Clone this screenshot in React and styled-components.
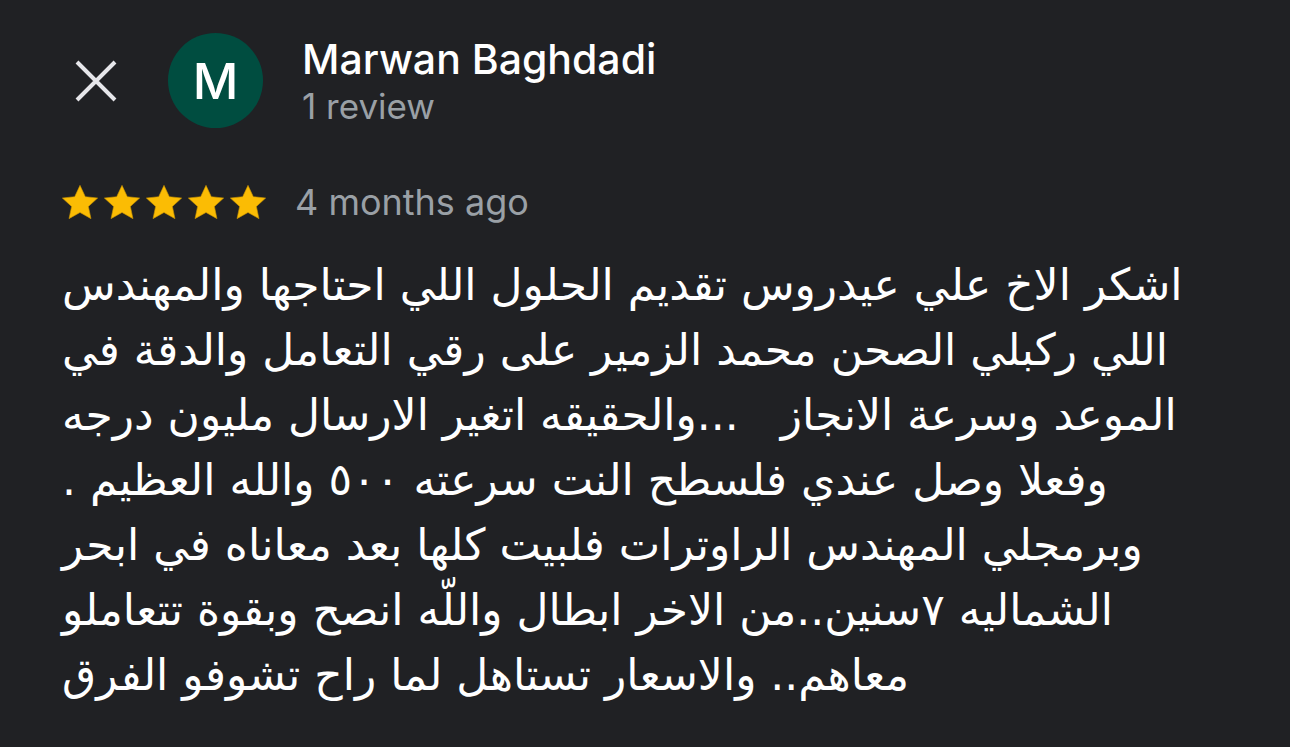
import React from "react";
import styled, { createGlobalStyle } from "styled-components";

const GlobalStyle = createGlobalStyle`
  html, body {
    margin: 0;
    padding: 0;
    background: #202124;
  }
`;

const lines = [
  "اشكر الاخ علي عيدروس تقديم الحلول اللي احتاجها والمهندس",
  "اللي ركبلي الصحن محمد الزمير على رقي التعامل والدقة في",
  "الموعد وسرعة الانجاز\u00a0\u00a0\u00a0...والحقيقه اتغير الارسال مليون درجه",
  "وفعلا وصل عندي فلسطح النت سرعته ٥٠٠ والله العظيم .",
  "وبرمجلي المهندس الراوترات فلبيت كلها بعد معاناه في ابحر",
  "الشماليه ٧سنين..من الاخر ابطال واللّه انصح وبقوة تتعاملو",
  "معاهم.. والاسعار تستاهل لما راح تشوفو الفرق",
];

function Star() {
  return (
    <svg width="36" height="34" viewBox="1.5 1 21 19.8">
      <path
        d="M12 1.2l3.1 6.6 7.2.8-5.4 4.9 1.5 7.1L12 17l-6.4 3.6 1.5-7.1-5.4-4.9 7.2-.8z"
        fill="#fbbc04"
        stroke="#c99400"
        strokeWidth="0.35"
        strokeLinejoin="round"
      />
    </svg>
  );
}

export default function App() {
  return (
    <>
      <GlobalStyle />
      <Page>
        <Header>
          <CloseButton aria-label="Close">
            <svg width="42" height="42" viewBox="0 0 42 42">
              <path
                d="M2 2L40 40M40 2L2 40"
                stroke="#e6e6ea"
                strokeWidth="4"
              />
            </svg>
          </CloseButton>
          <Avatar>M</Avatar>
          <Author>
            <Name>Marwan Baghdadi</Name>
            <Meta>1 review</Meta>
          </Author>
        </Header>
        <RatingRow>
          <Stars>
            {[0, 1, 2, 3, 4].map((i) => (
              <Star key={i} />
            ))}
          </Stars>
          <When>4 months ago</When>
        </RatingRow>
        <Body>
          {lines.map((l, i) => (
            <Line key={i} dir="rtl">
              {l}
            </Line>
          ))}
        </Body>
      </Page>
    </>
  );
}

const Page = styled.div`
  width: 1290px;
  height: 747px;
  box-sizing: border-box;
  padding: 33px 40px 0 62px;
  background: #202124;
  overflow: hidden;
  font-family: Inter, "Noto Sans", sans-serif;
`;

const Header = styled.div`
  display: flex;
  align-items: center;
`;

const CloseButton = styled.button`
  display: flex;
  align-items: center;
  justify-content: center;
  width: 42px;
  height: 42px;
  margin-left: 13px;
  padding: 0;
  border: none;
  background: none;
`;

const Avatar = styled.div`
  width: 95px;
  height: 95px;
  margin-left: 51px;
  border-radius: 50%;
  background: #004d40;
  color: #ffffff;
  display: flex;
  align-items: center;
  justify-content: center;
  font-size: 50px;
  font-weight: 500;
`;

const Author = styled.div`
  display: flex;
  flex-direction: column;
  margin-left: 39px;
`;

const Name = styled.div`
  color: #ffffff;
  font-size: 41px;
  font-weight: 500;
  line-height: 50px;
`;

const Meta = styled.div`
  color: #9aa0a6;
  font-size: 35px;
  line-height: 44px;
`;

const RatingRow = styled.div`
  display: flex;
  align-items: center;
  margin-top: 52px;
`;

const Stars = styled.div`
  display: flex;
  gap: 6px;
`;

const When = styled.div`
  margin-left: 29px;
  color: #9aa0a6;
  font-size: 36px;
`;

const Body = styled.div`
  margin-top: 28px;
  display: flex;
  flex-direction: column;
  align-items: flex-start;
`;

const Line = styled.div`
  color: #ffffff;
  font-family: "DejaVu Sans", sans-serif;
  font-size: 44px;
  line-height: 65px;
  white-space: nowrap;
`;
